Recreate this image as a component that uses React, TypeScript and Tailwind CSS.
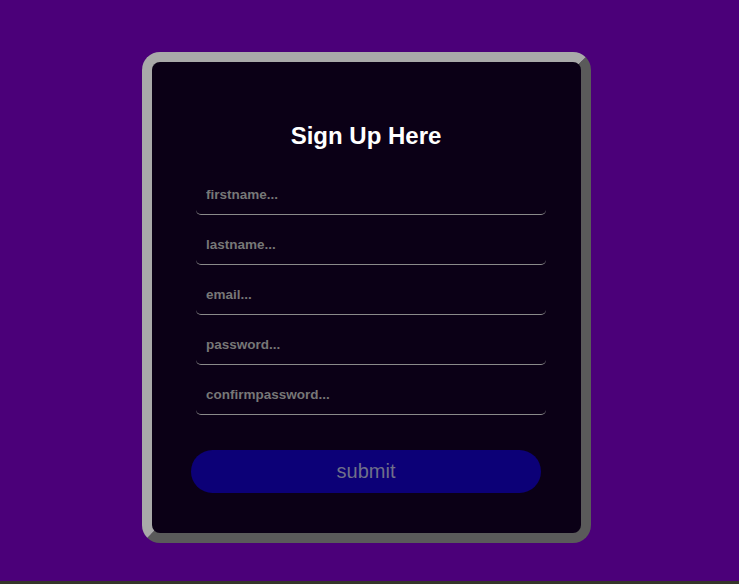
import React from "react";

const fields = ["firstname...", "lastname...", "email...", "password...", "confirmpassword..."];

export default function App() {
  return (
    <div className="flex h-[584px] w-full flex-col" style={{ fontFamily: '"Liberation Sans", Arial, sans-serif' }}>
      <div className="flex h-[581px] w-full justify-center bg-[#4b0079] pt-[52px]">
        <div className="ml-[-7px] h-[491px] w-[449px] rounded-[18px] border-[10px] border-t-[#a9a9a9] border-l-[#a9a9a9] border-b-[#5a5a5a] border-r-[#5a5a5a] bg-[#0b0016]">
          <div className="flex flex-col items-center pt-[60px]">
            <h1 className="text-[24px] font-bold leading-[28px] text-white">Sign Up Here</h1>
            <div className="mt-[22px] flex flex-col gap-[7px] pl-[10px]">
              {fields.map((f) => (
                <input
                  key={f}
                  placeholder={f}
                  className="h-[43px] w-[350px] rounded-[5px] border-b border-[#8a8a8a] bg-transparent px-[10px] pt-[2px] text-[13.5px] font-bold text-white outline-none placeholder:text-[#777777]"
                />
              ))}
            </div>
            <button className="mt-[35px] h-[43px] w-[350px] rounded-full bg-[#0c0077] pb-[2px] text-[20px] text-[#6f6f8a]">
              submit
            </button>
          </div>
        </div>
      </div>
      <div className="h-[3px] w-full bg-[#35352a]" />
    </div>
  );
}
